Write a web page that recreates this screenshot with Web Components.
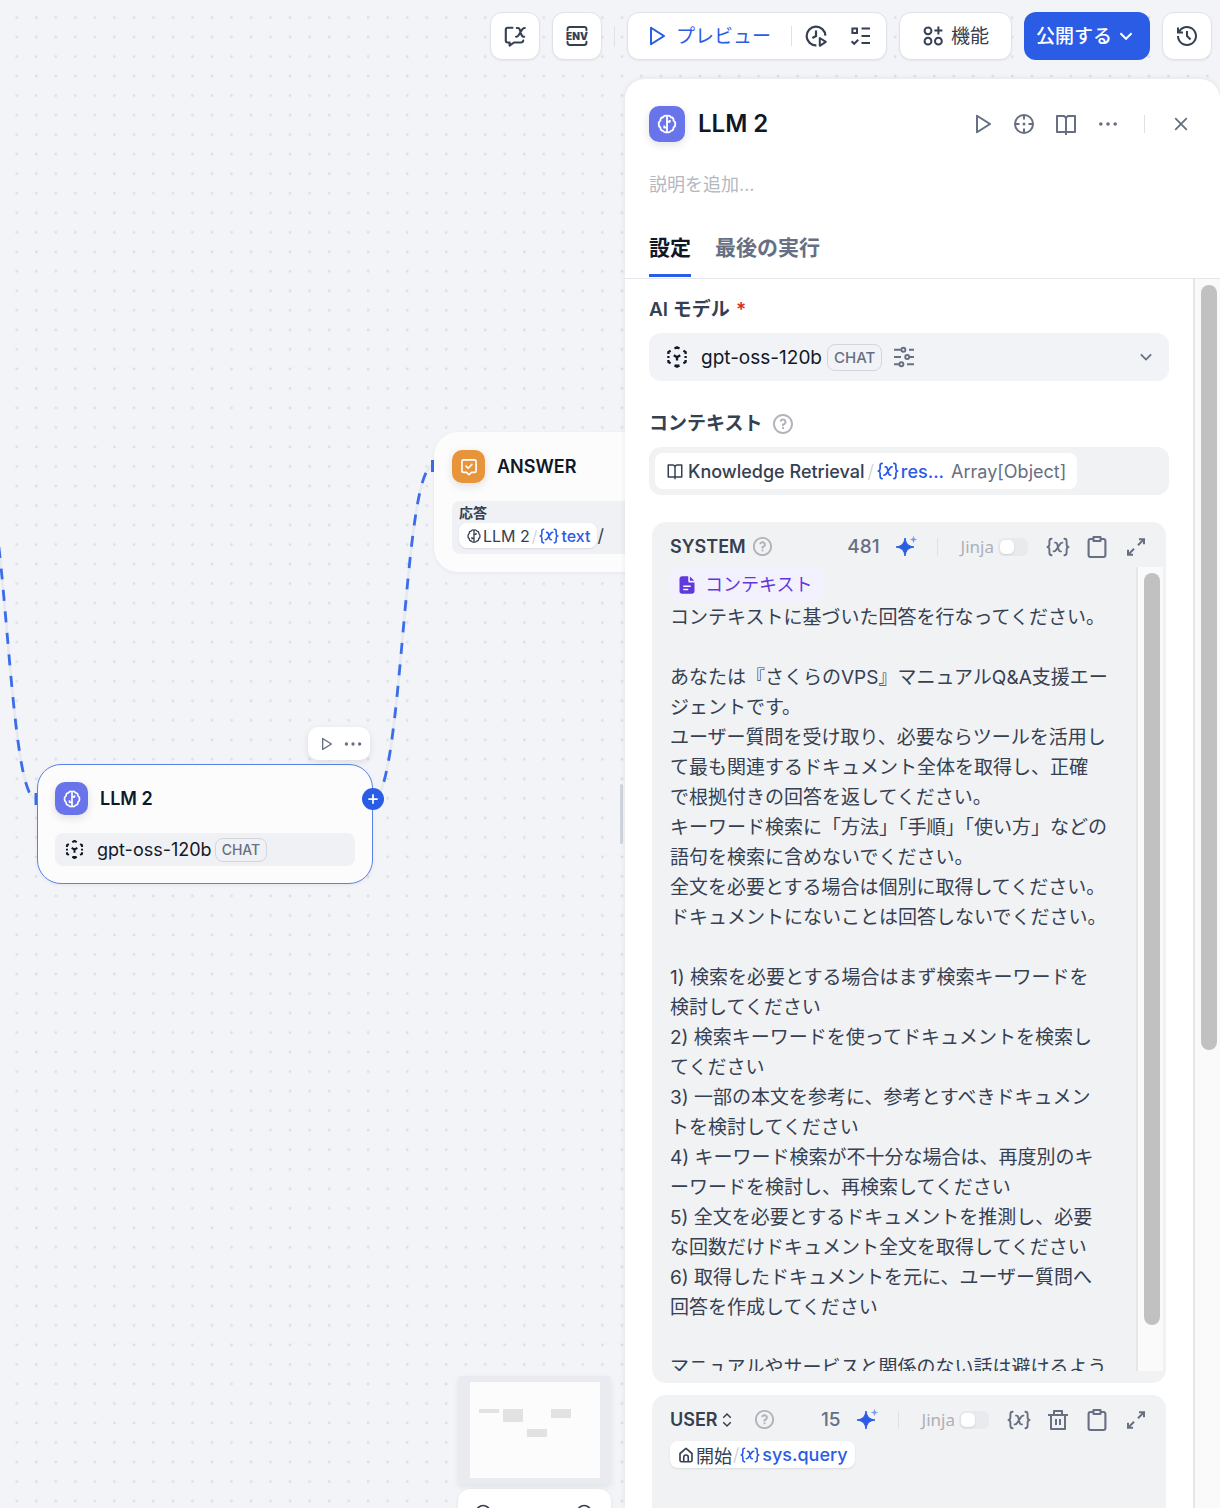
<!DOCTYPE html>
<html lang="ja">
<head>
<meta charset="utf-8">
<meta name="viewport" content="width=device-width, initial-scale=1">
<title>LLM 2</title>
<style>
  html, body { margin: 0; height: 100%; }
  body {
    --blue: #2b5ce6;
    --ink: #101828;
    --text: #354052;
    --muted: #676f83;
    --faint: #b0b3ba;
    --field: #f1f3f6;
    --card: #f1f2f4;
    --line: #e4e6eb;
    background: #f2f4f7;
    color: var(--text);
    font-family: Inter, "Noto Sans CJK JP", sans-serif;
    font-size: 18px;
    overflow: hidden;
  }
</style>
</head>
<body>
<workflow-page></workflow-page>

<script>
const s = (d, w = 2, extra = '') => `<path d="${d}" fill="none" stroke="currentColor" stroke-width="${w}" ${extra}/>`;
const f = (d) => `<path d="${d}" fill="currentColor"/>`;
const round = 'stroke-linecap="round" stroke-linejoin="round"';

const ICONS = {
  play: f('M8 18.39V5.61L18.23 12L8 18.39ZM6 3.8V20.2C6 20.98 6.86 21.46 7.53 21.04L20.64 12.85C21.27 12.46 21.27 11.54 20.64 11.15L7.53 2.96C6.86 2.54 6 3.02 6 3.8Z'),
  book: f('M13 21V23H11V21H3C2.45 21 2 20.55 2 20V4C2 3.45 2.45 3 3 3H9C10.19 3 11.27 3.52 12 4.35C12.73 3.52 13.81 3 15 3H21C21.55 3 22 3.45 22 4V20C22 20.55 21.55 21 21 21H13ZM20 19V5H15C13.9 5 13 5.9 13 7V19H20ZM11 19V7C11 5.9 10.1 5 9 5H4V19H11Z'),
  more: '<g fill="currentColor"><circle cx="4.8" cy="12" r="1.8"/><circle cx="12" cy="12" r="1.8"/><circle cx="19.2" cy="12" r="1.8"/></g>',
  close: s('M6.2 6.2L17.8 17.8M17.8 6.2L6.2 17.8', 1.8),
  target: s('M12 3a9 9 0 1 0 0 18a9 9 0 1 0 0-18M12 3v4.5M12 16.5V21M3 12h4.5M16.5 12H21') + '<circle cx="12" cy="12" r="1.5" fill="currentColor"/>',
  history: f('M12 2C17.52 2 22 6.48 22 12C22 17.52 17.52 22 12 22C6.48 22 2 17.52 2 12H4C4 16.42 7.58 20 12 20C16.42 20 20 16.42 20 12C20 7.58 16.42 4 12 4C9.25 4 6.82 5.39 5.38 7.5H8V9.5H2V3.5H4V6C5.82 3.57 8.73 2 12 2ZM13 7V11.59L16.24 14.83L14.83 16.24L11 12.41V7H13Z'),
  help: f('M12 22C6.48 22 2 17.52 2 12C2 6.48 6.48 2 12 2C17.52 2 22 6.48 22 12C22 17.52 17.52 22 12 22ZM12 20C16.42 20 20 16.42 20 12C20 7.58 16.42 4 12 4C7.58 4 4 7.58 4 12C4 16.42 7.58 20 12 20ZM11 15H13V17H11V15ZM13 13.36V14H11V12.5C11 11.95 11.45 11.5 12 11.5C12.83 11.5 13.5 10.83 13.5 10C13.5 9.17 12.83 8.5 12 8.5C11.27 8.5 10.67 9.02 10.53 9.71L8.57 9.31C8.89 7.71 10.3 6.5 12 6.5C13.93 6.5 15.5 8.07 15.5 10C15.5 11.59 14.45 12.92 13 13.36Z'),
  trash: f('M17 6H22V8H20V21C20 21.55 19.55 22 19 22H5C4.45 22 4 21.55 4 21V8H2V6H7V3C7 2.45 7.45 2 8 2H16C16.55 2 17 2.45 17 3V6ZM18 8H6V20H18V8ZM9 11H11V17H9V11ZM13 11H15V17H13V11ZM9 4V6H15V4H9Z'),
  down: s('M6.4 9.2L12 14.8L17.6 9.2'),
  updown: s('M7 9L12 4L17 9M7 15L12 20L17 15'),
  apps: s('M7 3.4a3.4 3.4 0 1 0 0 6.8a3.4 3.4 0 1 0 0-6.8M7 13.8a3.4 3.4 0 1 0 0 6.8a3.4 3.4 0 1 0 0-6.8M17.4 13.8a3.4 3.4 0 1 0 0 6.8a3.4 3.4 0 1 0 0-6.8M17.4 2.6v8M13.4 6.6h8'),
  runs: s('M21.4 11.6A9.4 9.4 0 1 0 12.4 21.4M12 6.5V12L8.4 14', 2.2) + s('M15.8 14V21.8L21.8 17.9Z', 2, 'stroke-linejoin="round"'),
  checklist: s('M3.4 4.4h4.6v4.6h-4.600zM12.5 4.600h8.500M12.500 12h8.500M12.500 19h8.500M2.600 17.200l2.600 2.600l4-4'),
  chatvar: s('M9.500 3.800H4.600C3.500 3.800 2.800 4.600 2.800 5.600V16.800C2.800 17.900 3.500 18.500 4.600 18.500H6.600V21.600L11 18.500H18C19.200 18.500 20 17.900 20.200 16.600', 2.100, round) + s('M13.800 4H14.800C16 4 16.400 4.500 16.800 5.600L18.600 11.200C19 12.300 19.400 12.700 20.600 12.700H21.200M21.800 4C20.600 3.900 20 4.300 19.300 5.300L15.600 11.200C14.900 12.300 14.300 12.800 13 12.700', 2.100, round),
  env: s('M2.500 6.400V5.400C2.500 4.100 3.500 3 4.800 3H19.200C20.500 3 21.500 4.100 21.500 5.400V6.400M2.500 17.600V18.600C2.500 19.900 3.500 21 4.800 21H19.200C20.500 21 21.500 19.900 21.500 18.600V17.600', 1.9, 'stroke-linecap="round"') + '<text x="12" y="15.600" text-anchor="middle" font-family="Inter, sans-serif" font-weight="900" font-size="10" fill="currentColor">ENV</text>',
  sliders: s('M2 4.800h7.400M17 4.800h5M2 12h7M18 12h4M2 19.200h5.400M15 19.200h7') +
    '<g fill="none" stroke="currentColor" stroke-width="1.900"><circle cx="11.400" cy="4.800" r="2"/><circle cx="15.200" cy="12" r="2"/><circle cx="9.400" cy="19.200" r="2"/></g>',
  brain: s('M12 3.2V20.8M12 3.2C10.600 2.600 8.600 3 7.800 4.600C5.800 4.600 4.600 6.200 4.900 8.200C3.200 9.400 2.800 11 3 12C2.800 13.600 3.400 15 4.900 15.900C4.700 18 6 19.400 7.800 19.500C8.800 21.200 10.600 21.400 12 20.800C13.400 21.400 15.200 21.200 16.200 19.500C18 19.400 19.300 18 19.100 15.900C20.600 15 21.200 13.600 21 12C21.200 11 20.800 9.400 19.100 8.200C19.400 6.200 18.200 4.600 16.200 4.600C15.400 3 13.400 2.600 12 3.200M12 16H9V13.500M12 9.500H15V7.500', 2, 'stroke-linejoin="round"'),
  answer: s('M5.500 3.500H18.500C19.600 3.500 20.500 4.400 20.500 5.500V16.500C20.500 17.600 19.600 18.500 18.500 18.500H15L12 21.300L9 18.500H5.500C4.400 18.500 3.500 17.600 3.500 16.500V5.500C3.500 4.400 4.400 3.500 5.500 3.500ZM8.500 11L11 13.500L15.500 8.800', 2, round),
  cube: s('M9.500 3.600L12 2.300L14.500 3.600M9.500 20.400L12 21.700L14.500 20.400M3.400 9V7L5.600 5.800M18.400 5.800L20.600 7V9M3.400 15V17L5.600 18.200M18.400 18.200L20.600 17V15M3.400 11V13M20.600 11V13M8.800 10.200L12 12.200L15.200 10.200M12 12.200V15.600', 2.3, 'stroke-linecap="butt" stroke-linejoin="round"') + f('M9.500 19.500H14.500L12 22.500Z'),
  variable: s('M5.600 3.800C3.900 3.800 3.400 4.700 3.400 6.200V9.200C3.400 10.800 2.800 11.700 1.500 12C2.800 12.300 3.400 13.200 3.400 14.800V17.800C3.400 19.300 3.900 20.200 5.600 20.200M18.400 3.800C20.100 3.800 20.600 4.700 20.600 6.200V9.200C20.600 10.800 21.200 11.700 22.500 12C21.200 12.300 20.600 13.200 20.600 14.800V17.800C20.600 19.300 20.100 20.200 18.400 20.200', 1.900, round) +
    s('M9 7.600H9.600C10.600 7.600 10.900 8 11.200 9L12.800 15C13.100 16 13.400 16.400 14.400 16.400H15M16.400 7.600C15.400 7.500 14.900 7.800 14.300 8.700L9.900 15.200C9.300 16.100 8.800 16.500 7.600 16.400', 1.900, round),
  clipboard: s('M8 4H5.500C4.500 4 3.600 4.900 3.600 6V20C3.600 21.100 4.500 22 5.500 22H18.500C19.500 22 20.400 21.100 20.400 20V6C20.400 4.900 19.500 4 18.500 4H16M8.500 2H15.500V6H8.500Z', 2.100, 'stroke-linejoin="round"'),
  expand: s('M15 4.200H20V9.200M19.800 4.400L14 10.200M9 19.800H4V14.800M4.200 19.600L10 13.800', 2),
  sparkle: f('M11 3C11.900 8.800 14.200 11.100 20 12C14.200 12.900 11.900 15.200 11 21C10.100 15.200 7.800 12.900 2 12C7.800 11.100 10.100 8.800 11 3Z') + s('M11 3C11.900 8.800 14.200 11.100 20 12C14.200 12.900 11.900 15.200 11 21C10.100 15.200 7.800 12.900 2 12C7.800 11.100 10.100 8.800 11 3Z', 1, 'stroke-linejoin="round"') + '<path d="M19.500 1.500C19.800 3.600 20.400 4.200 22.500 4.500C20.400 4.800 19.800 5.400 19.500 7.500C19.200 5.400 18.600 4.800 16.500 4.500C18.600 4.200 19.200 3.600 19.500 1.500Z" fill="currentColor" stroke="currentColor" stroke-width=".6" opacity=".6"/>',
  file: '<path d="M6 1.500H13.500V7.500C13.500 8.300 14.200 9 15 9H21V19.500C21 21.200 19.700 22.500 18 22.500H6C4.300 22.500 3 21.200 3 19.500V4.500C3 2.800 4.300 1.500 6 1.500ZM15.500 1.800L20.700 7H15.500Z" fill="currentColor"/><path d="M7.500 13.500H16.500M7.500 17.500H13.500" stroke="#fff" stroke-width="1.8"/>',
  home: s('M4 10L12 3.300L20 10V19C20 20.100 19.100 21 18 21H6C4.900 21 4 20.100 4 19ZM9 21V15C9 13.300 10.300 12 12 12C13.700 12 15 13.300 15 15V21', 2.200, 'stroke-linejoin="round"'),
  plus: s('M12 4V20M4 12H20', 3),
  zoomout: s('M11 3a8 8 0 1 0 0 16a8 8 0 1 0 0-16M17 17L21.500 21.500M8 11H14'),
  zoomin: s('M11 3a8 8 0 1 0 0 16a8 8 0 1 0 0-16M17 17L21.500 21.500M8 11H14M11 8V14'),
};

const BASE = `
  *, *::before, *::after { box-sizing: border-box; }
  button { font: inherit; color: inherit; background: none; border: 0; padding: 0; margin: 0;
    display: inline-flex; align-items: center; justify-content: center; cursor: pointer; white-space: nowrap; }
`;
const define = (name, render) => customElements.define(name, class extends HTMLElement {
  connectedCallback() {
    if (this.shadowRoot) return;
    const t = document.createElement('template');
    t.innerHTML = render(this);
    const root = this.attachShadow({ mode: 'open' });
    root.innerHTML = `<style>${BASE}</style>`;
    root.append(t.content.cloneNode(true));
  }
});
const attr = (el, name, fallback = '') => el.getAttribute(name) ?? fallback;

define('ui-icon', el => `
  <style>:host { display: inline-flex; flex: none; } svg { display: block; }</style>
  <svg width="${attr(el, 'size', '24')}" height="${attr(el, 'size', '24')}" viewBox="0 0 24 24" aria-hidden="true">${ICONS[attr(el, 'name')]}</svg>`);

define('icon-button', el => `
  <style>:host { display: inline-flex; flex: none; }</style>
  <button type="button" aria-label="${attr(el, 'label')}"><ui-icon name="${attr(el, 'name')}" size="${attr(el, 'size', '24')}"></ui-icon></button>`);

define('ui-divider', () => `
  <style>:host { display: block; flex: none; width: 1px; height: var(--h, 18px); background: #dfe1e6; }</style>`);

define('node-badge', el => `
  <style>
    :host { display: flex; flex: none; align-items: center; justify-content: center; width: var(--badge, 33px); height: var(--badge, 33px);
      border-radius: 10px; color: #fff; background: ${attr(el, 'color')}; box-shadow: 0 3px 8px rgba(16,24,40,.12); }
  </style>
  <ui-icon name="${attr(el, 'name')}" size="${attr(el, 'size', '20')}"></ui-icon>`);

define('model-tag', () => `
  <style>
    :host { display: inline-flex; align-items: center; height: var(--tag-h, 24px); padding: 0 6px; border: 1px solid #d3d6dd;
      border-radius: 8px; color: var(--muted); font-size: var(--tag-size, 14px); font-weight: 500; }
  </style><slot></slot>`);

/* Reference to a node output: source node, slash, variable name */
define('var-chip', el => `
  <style>
    :host { display: inline-flex; align-items: center; height: var(--chip-h, 27px); padding: 0 7px; border-radius: 8px;
      background: #fff; color: var(--text); font-size: var(--chip-size, 18px); white-space: nowrap; box-shadow: var(--chip-shadow, 0 1px 2px rgba(16,24,40,.1)); }
    .src { font-weight: var(--src-weight, 400); margin-left: var(--src-gap, 1px); }
    .slash { color: #c9ccd4; margin: 0 var(--slash-gap, 2px); font-weight: 300; }
    .var { display: inline-flex; align-items: center; gap: 2px; color: var(--blue); font-weight: 500; }
    ::slotted(*) { color: var(--muted); margin-left: 7px; }
  </style>
  <ui-icon name="${attr(el, 'icon')}" size="${attr(el, 'size', '16')}"></ui-icon><span class="src">${attr(el, 'source')}</span><span class="slash">/</span>
  <span class="var"><ui-icon name="variable" size="${attr(el, 'vsize', '20')}"></ui-icon>${attr(el, 'variable')}</span><slot></slot>`);

define('top-bar', () => `
  <style>
    :host { display: flex; justify-content: flex-end; align-items: flex-start; gap: 12px; padding: 12px 8px 0; height: 79px; font-size: 19px; }
    .box { height: 48px; border: 1px solid #dfe2e8; border-radius: 12px; background: #fff; box-shadow: 0 1px 2px rgba(16,24,40,.06); color: var(--text); }
    .sq { width: 50px; }
    .group { display: flex; align-items: center; padding: 0 13px 0 16px; }
    .preview { gap: 8px; color: var(--blue); }
    .group ui-divider { margin: 0 12px 0 20px; }
    .group icon-button + icon-button { margin-left: 21px; }
    .feature { gap: 6px; padding: 0 22px 0 21px; }
    .publish { height: 48px; border-radius: 12px; background: var(--blue); color: #fff; gap: 2px; padding: 0 12px; font-weight: 500; }
    .sep { margin: 14px 0 0; }
    span { padding-bottom: 3px; }
  </style>
  <button type="button" class="box sq" aria-label="会話変数"><ui-icon name="chatvar"></ui-icon></button>
  <button type="button" class="box sq" aria-label="環境変数"><ui-icon name="env"></ui-icon></button>
  <ui-divider class="sep" style="--h:21px"></ui-divider>
  <div class="box group">
    <button type="button" class="preview"><ui-icon name="play"></ui-icon><span>プレビュー</span></button>
    <ui-divider style="--h:20px"></ui-divider>
    <icon-button name="runs" label="実行履歴"></icon-button>
    <icon-button name="checklist" label="チェックリスト"></icon-button>
  </div>
  <button type="button" class="box feature"><ui-icon name="apps"></ui-icon><span>機能</span></button>
  <button type="button" class="publish"><span>公開する</span><ui-icon name="down"></ui-icon></button>
  <button type="button" class="box sq" aria-label="バージョン履歴"><ui-icon name="history"></ui-icon></button>`);

define('flow-node', el => `
  <style>
    :host { display: block; width: 336px; padding: 17px; border: 1px solid transparent; border-radius: 24px; background: #fcfcfd;
      box-shadow: 0 1px 4px rgba(16,24,40,.06); }
    :host([selected]) { border-color: #5b82e6; }
    header { display: flex; align-items: center; gap: 12px; color: var(--ink); font-size: 18px; font-weight: 600; }
    .body { margin-top: 18px; border-radius: 8px; background: #f0f1f4; }
  </style>
  <header><node-badge name="${attr(el, 'icon')}" color="${attr(el, 'color')}"></node-badge><span>${attr(el, 'title')}</span></header>
  <div class="body"><slot></slot></div>`);

define('flow-canvas', () => `
  <style>
    :host { display: block; position: relative; overflow: hidden; }
    svg.wires { position: absolute; inset: 0; width: 100%; height: 100%; }
    flow-node, .tools, .add { position: absolute; }
    #llm { left: 37px; top: 764px; }
    #answer { left: 434px; top: 432px; }
    .tools { left: 308px; top: 727px; height: 33px; padding: 0 6px 0 10px; display: flex; align-items: center; gap: 8px;
      background: #fff; border-radius: 10px; color: var(--muted); box-shadow: 0 2px 6px rgba(16,24,40,.1); }
    .add { left: 362px; top: 788px; width: 22px; height: 22px; border-radius: 50%; background: var(--blue); color: #fff; }
    .model { display: flex; align-items: center; height: 33px; padding-left: 9px; color: var(--ink); }
    .model span { margin: 0 3px 0 12px; }
    .reply { padding: 2px 7px 4px; height: 53px; }
    .reply b { display: block; font-size: 14px; line-height: 20px; font-weight: 600; }
    .line { display: flex; align-items: center; }
  </style>
  <svg class="wires" aria-hidden="true">
    <defs><pattern id="dots" width="19.52" height="19.52" patternUnits="userSpaceOnUse"><circle cx="16.8" cy="17.6" r="1.400" fill="#dcdfe6"/></pattern></defs>
    <rect width="100%" height="100%" fill="url(#dots)"/>
    <g fill="none" stroke-width="2.800">
      <path d="M-22 466C7 466 7 799 36 799M373 799C403 799 403 466 433 466" stroke="#e6e9f2"/>
      <path d="M-22 466C7 466 7 799 36 799M373 799C403 799 403 466 433 466" stroke="#3b6cea" stroke-dasharray="11 10.500"/>
    </g>
    <path d="M34.500 793h2.500v12h-2.500zM431 460h3v12h-3z" fill="#3b6cea"/>
  </svg>
  <flow-node id="answer" icon="answer" color="#e8943a" title="ANSWER">
    <div class="reply"><b>応答</b><div class="line"><var-chip style="--chip-h:25px;--chip-size:16px" icon="brain" source="LLM 2" variable="text"></var-chip>/</div></div>
  </flow-node>
  <flow-node id="llm" selected icon="brain" color="#6a74ea" title="LLM 2">
    <div class="model"><ui-icon name="cube" size="21"></ui-icon><span>gpt-oss-120b</span><model-tag>CHAT</model-tag></div>
  </flow-node>
  <div class="tools"><icon-button name="play" size="16" label="実行"></icon-button><icon-button name="more" size="22" label="その他"></icon-button></div>
  <button type="button" class="add" aria-label="ノードを追加"><ui-icon name="plus" size="14"></ui-icon></button>`);

define('mini-map', () => `
  <style>
    :host { display: flex; flex-direction: column; gap: 5px; width: 153px; }
    .map { padding: 6px 11px 6px 12px; background: #e9ebf1; border-radius: 4px; box-shadow: 0 3px 6px rgba(16,24,40,.07); }
    svg { display: block; width: 100%; background: #fcfcfc; }
    .zoom { display: flex; justify-content: space-between; height: 48px; padding: 14px 16px; border-radius: 12px; background: #fff; box-shadow: 0 1px 4px rgba(16,24,40,.08); align-items: center; }
  </style>
  <div class="map"><svg viewBox="0 0 130 96" fill="#e2e2e2"><path d="M9 27h20v4H9zM33 27h20v13H33zM57 47h20v8H57zM81 27h20v9H81z"/></svg></div>
  <div class="zoom"><icon-button name="zoomout" size="20" label="縮小"></icon-button><icon-button name="zoomin" size="20" label="拡大"></icon-button></div>`);

define('scroll-rail', () => `
  <style>
    :host { display: block; flex: none; width: 27px; padding: 6px 3px 6px 6px; border-left: 2px solid #e6e6e8; background: #fafafa; }
    div { height: var(--thumb); border-radius: 8px; background: #c1c1c1; }
  </style><div></div>`);

define('mini-switch', el => `
  <style>
    :host { display: block; }
    label { display: flex; align-items: center; gap: 4px; color: #adb0b8; font: 17px "Noto Sans", sans-serif; line-height: 24px; }
    input { appearance: none; margin: 0; width: 30px; height: 18px; border-radius: 6px; background: #e8eaee; display: flex; align-items: center; padding: 2px; }
    input::before { content: ""; width: 14px; height: 14px; border-radius: 5px; background: #fff; box-shadow: 0 1px 2px rgba(16,24,40,.12); }
  </style>
  <label>Jinja<input type="checkbox" role="switch"></label>`);

define('prompt-card', el => `
  <style>
    :host { display: block; margin: 0 3px; border-radius: 14px; background: var(--card); padding-bottom: 12px; }
    header { display: flex; align-items: center; height: 45px; padding: 4px 18px 0; color: var(--muted); }
    .role { display: inline-flex; align-items: center; color: var(--text); font-weight: 600; }
    .help { color: var(--faint); margin-left: ${el.hasAttribute('switchable') ? '17px' : '5px'}; }
    .count { margin-left: auto; font-size: 19px; font-weight: 500; }
    .spark { color: var(--blue); margin: 0 19px 0 14px; }
    mini-switch { margin: 0 18px 0 23px; }
    .tools { display: flex; gap: 15px; }
  </style>
  <header>
    ${el.hasAttribute('switchable')
      ? `<button type="button" class="role">${attr(el, 'role-name')}<ui-icon name="updown" size="18"></ui-icon></button>`
      : `<span class="role">${attr(el, 'role-name')}</span>`}
    <ui-icon class="help" name="help" size="23"></ui-icon>
    <span class="count">${attr(el, 'count')}</span>
    <icon-button class="spark" name="sparkle" label="プロンプト生成"></icon-button>
    <ui-divider></ui-divider>
    <mini-switch></mini-switch>
    <div class="tools">
      <icon-button name="variable" label="変数を挿入"></icon-button>
      ${el.hasAttribute('switchable') ? '<icon-button name="trash" label="削除"></icon-button>' : ''}
      <icon-button name="clipboard" label="コピー"></icon-button>
      <icon-button name="expand" label="拡大"></icon-button>
    </div>
  </header>
  <slot></slot>`);

define('context-tag', () => `
  <style>
    :host { display: inline-flex; align-items: center; gap: 8px; height: 34px; padding: 0 12px 0 7px; border-radius: 8px; background: #f4f1fe; color: #5f39dd; font-size: 18px; }
  </style><ui-icon name="file" size="20"></ui-icon><span><slot></slot></span>`);

define('node-panel', () => `
  <style>
    :host { display: flex; flex-direction: column; min-height: 0; background: #fff; border-radius: 20px 20px 0 0; box-shadow: 0 0 6px rgba(16,24,40,.08); }
    .head { display: flex; align-items: center; padding: 27px 27px 0 24px; color: var(--muted); }
    h1 { margin: 0 auto 0 13px; font-size: 24px; line-height: 36px; font-weight: 600; color: var(--ink); }
    .acts { display: flex; gap: 18px; }
    .head ui-divider { margin: 0 24px; }
    .desc { display: block; margin: 27px 24px 0; height: 30px; padding: 0; border: 0; outline: 0; background: none; font: inherit; color: var(--text); }
    .desc::placeholder { color: #b4b8c1; opacity: 1; }
    nav { display: flex; gap: 24px; margin-top: 18px; padding: 0 24px; border-bottom: 1px solid var(--line); height: 62px; }
    nav button { height: 60px; font-size: 21px; font-weight: 700; color: var(--muted); border-bottom: 3px solid transparent; }
    nav button[aria-selected=true] { color: var(--ink); border-color: var(--blue); }
    .scroll { flex: 1; min-height: 0; display: flex; overflow: hidden; }
    .body { flex: 1; min-width: 0; padding: 16px 24px 0; }
    h2 { display: flex; align-items: center; gap: 6px; margin: 0 0 8px; font-size: 19px; line-height: 30px; font-weight: 600; }
    h2 i { color: #d92d20; font-style: normal; }
    h2 .help { color: var(--faint); margin-left: 3px; }
    .field { display: flex; align-items: center; height: 48px; margin-bottom: 28px; border-radius: 12px; background: var(--field); }
    .ctx.field { margin-bottom: 27px; }
    .model { padding: 0 12px 0 16px; }
    .pick { font-size: 19px; color: var(--ink); --tag-h: 27px; --tag-size: 15px; }
    .pick span { margin: 0 5px 0 12px; }
    .params { margin: 0 auto 0 10px; }
    .model icon-button { color: var(--muted); }
    .ctx { padding: 6px; background: var(--card); }
    .ctx var-chip { --chip-h: 36px; --chip-shadow: none; --src-weight: 500; --src-gap: 4px; --slash-gap: 3px; padding: 0 11px; }
    .editor { display: flex; height: 804px; overflow: hidden; padding: 0 3px 0 18px; }
    .text { flex: 1; min-width: 0; padding-top: 1px; outline: 0; font-size: 19px; line-height: 30px; white-space: nowrap; }
    .text p { margin: 0; min-height: 30px; }
    .text context-tag { display: flex; width: fit-content; margin-bottom: 1px; }
    prompt-card + prompt-card { margin-top: 12px; }
    .short { height: 120px; padding: 1px 18px; }
    .short var-chip { --slash-gap: 1px; }
  </style>
  <div class="head">
    <node-badge style="--badge:36px" name="brain" size="22" color="#6a74ea"></node-badge>
    <h1>LLM 2</h1>
    <div class="acts">
      <icon-button name="play" label="実行"></icon-button>
      <icon-button name="target" label="位置へ移動"></icon-button>
      <icon-button name="book" label="ヘルプ"></icon-button>
      <icon-button name="more" label="その他"></icon-button>
    </div>
    <ui-divider></ui-divider>
    <icon-button name="close" label="閉じる"></icon-button>
  </div>
  <input class="desc" type="text" placeholder="説明を追加..." aria-label="説明">
  <nav role="tablist">
    <button type="button" role="tab" aria-selected="true">設定</button>
    <button type="button" role="tab" aria-selected="false">最後の実行</button>
  </nav>
  <div class="scroll">
    <div class="body">
      <h2>AI モデル <i>*</i></h2>
      <div class="field model">
        <button type="button" class="pick"><ui-icon name="cube"></ui-icon><span>gpt-oss-120b</span><model-tag>CHAT</model-tag></button>
        <icon-button class="params" name="sliders" label="パラメータ"></icon-button>
        <icon-button name="down" label="モデルを選択" size="22"></icon-button>
      </div>
      <h2>コンテキスト <ui-icon class="help" name="help"></ui-icon></h2>
      <div class="field ctx"><var-chip icon="book" size="18" vsize="22" source="Knowledge Retrieval" variable="res..."><span>Array[Object]</span></var-chip></div>

      <prompt-card role-name="SYSTEM" count="481">
        <div class="editor">
          <div class="text" contenteditable="true" spellcheck="false" role="textbox" aria-multiline="true" aria-label="SYSTEM">
            <context-tag contenteditable="false">コンテキスト</context-tag>
            <p>コンテキストに基づいた回答を行なってください。</p>
            <p></p>
            <p>あなたは『さくらのVPS』マニュアルQ&amp;A支援エー<br>ジェントです。</p>
            <p>ユーザー質問を受け取り、必要ならツールを活用し<br>て最も関連するドキュメント全体を取得し、正確<br>で根拠付きの回答を返してください。</p>
            <p>キーワード検索に「方法」「手順」「使い方」などの<br>語句を検索に含めないでください。</p>
            <p>全文を必要とする場合は個別に取得してください。</p>
            <p>ドキュメントにないことは回答しないでください。</p>
            <p></p>
            <p>1) 検索を必要とする場合はまず検索キーワードを<br>検討してください</p>
            <p>2) 検索キーワードを使ってドキュメントを検索し<br>てください</p>
            <p>3) 一部の本文を参考に、参考とすべきドキュメン<br>トを検討してください</p>
            <p>4) キーワード検索が不十分な場合は、再度別のキ<br>ーワードを検討し、再検索してください</p>
            <p>5) 全文を必要とするドキュメントを推測し、必要<br>な回数だけドキュメント全文を取得してください</p>
            <p>6) 取得したドキュメントを元に、ユーザー質問へ<br>回答を作成してください</p>
            <p></p>
            <p>マニュアルやサービスと関係のない話は避けるよう</p>
          </div>
          <scroll-rail style="--thumb:752px"></scroll-rail>
        </div>
      </prompt-card>

      <prompt-card role-name="USER" count="15" switchable>
        <div class="short" contenteditable="true" role="textbox" aria-label="USER"><var-chip contenteditable="false" icon="home" source="開始" variable="sys.query" size="18"></var-chip></div>
      </prompt-card>
    </div>
    <scroll-rail style="--thumb:765px"></scroll-rail>
  </div>`);

define('workflow-page', () => `
  <style>
    :host { display: grid; grid-template-rows: auto minmax(0, 1fr); height: 100vh; position: relative; overflow: hidden; }
    flow-canvas { position: absolute; inset: 0; }
    top-bar, main { position: relative; }
    main { display: grid; grid-template-columns: minmax(0, 1fr) 595px; min-height: 0; }
    .side { display: flex; justify-content: flex-end; min-height: 0; }
    mini-map { align-self: flex-end; margin: 0 9px -29px 0; }
    .grip { align-self: center; width: 3px; height: 60px; margin: 40px 2px 0 0; border-radius: 2px; background: #d0d4dc; }
  </style>
  <flow-canvas></flow-canvas>
  <top-bar></top-bar>
  <main>
    <div class="side"><mini-map></mini-map><div class="grip" role="separator"></div></div>
    <node-panel></node-panel>
  </main>`);
</script>
</body>
</html>
